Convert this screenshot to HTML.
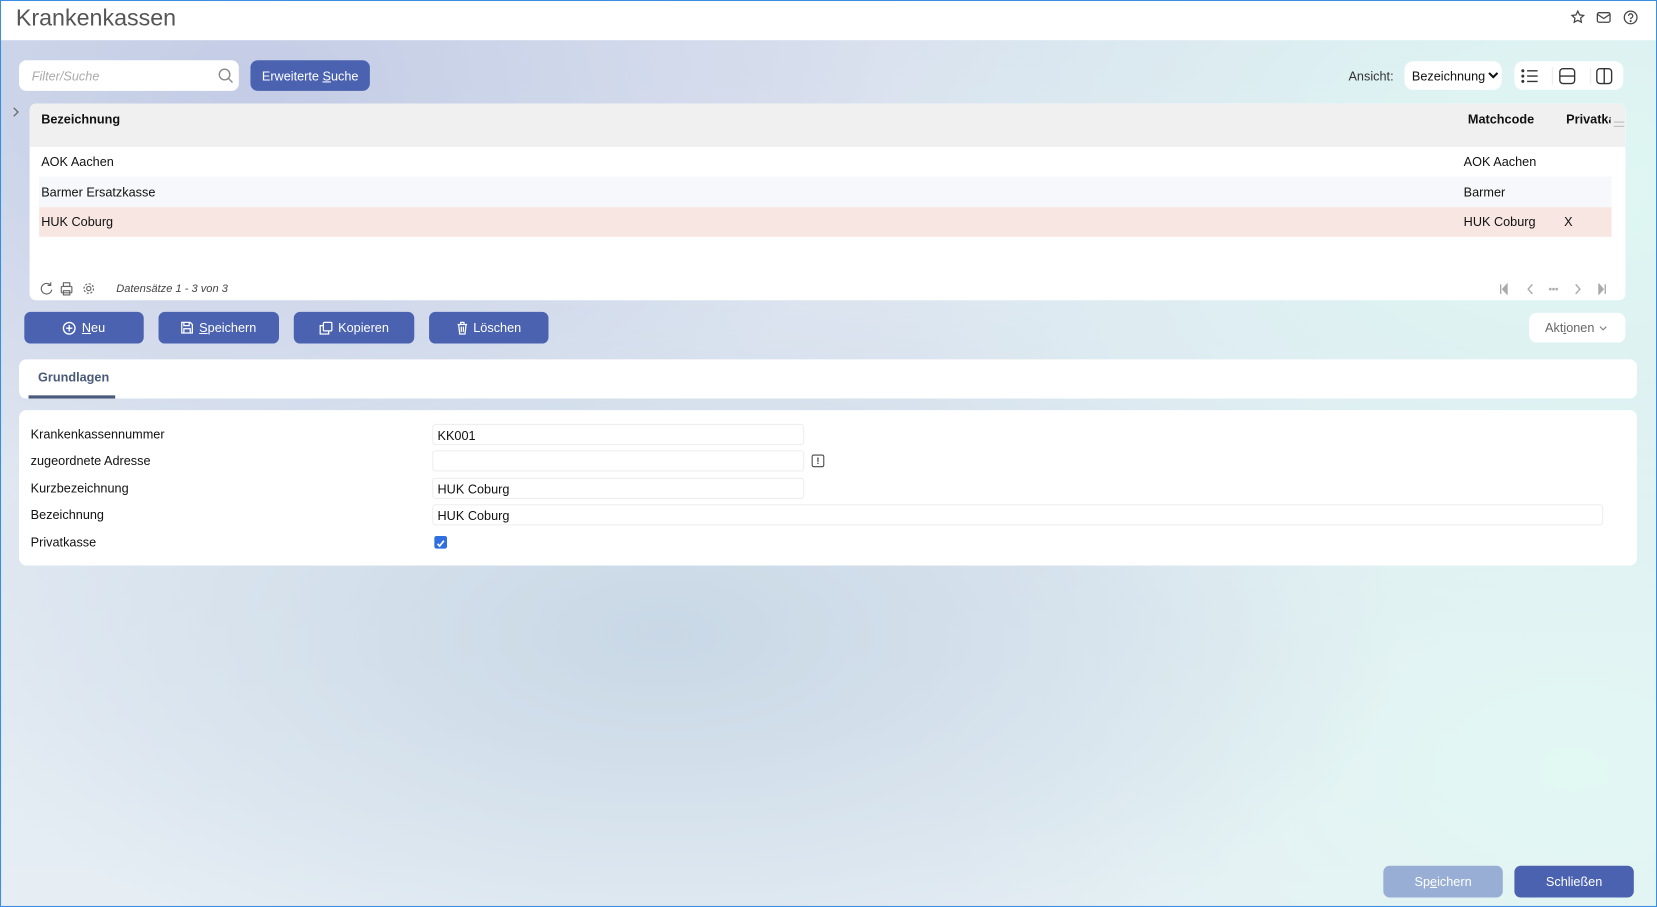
<!DOCTYPE html>
<html><head><meta charset="utf-8"><style>
*{box-sizing:border-box;margin:0;padding:0}
html,body{width:1657px;height:907px;overflow:hidden;font-family:"Liberation Sans",Arial,sans-serif;}
#w{width:1568px;height:858px;transform:scale(1.0568,1.0571);transform-origin:0 0;position:relative;border:1px solid #3a8ee0;
background:
radial-gradient(ellipse 600px 400px at 15% 10%, #c4cce6 0%, rgba(196,204,230,0) 100%),
radial-gradient(ellipse 700px 500px at 95% 20%, #dff8f3 0%, rgba(223,248,243,0) 100%),
radial-gradient(ellipse 700px 350px at 40% 70%, #c9d8e6 0%, rgba(201,216,230,0) 100%),
radial-gradient(ellipse 600px 400px at 95% 85%, #e2f8f3 0%, rgba(226,248,243,0) 100%),
linear-gradient(180deg,#d8e0ee,#e6eef4);}
.a{position:absolute}
.hdr{left:0;top:0;width:1566px;height:37px;background:#fff}
.t{font-size:12px;color:#111}
.btn{position:absolute;background:#4a62b0;color:#fff;border-radius:6px;font-size:12px;display:flex;align-items:center;justify-content:center}
.btn svg{margin-right:5px}
.card{position:absolute;background:#fff;border-radius:6px}
.inp{position:absolute;border:1px solid #eee;border-radius:3px;background:#fff;font-size:12px;padding:3px 4px;color:#111;height:20px}
.lbl{position:absolute;left:11px;font-size:12px;color:#111}
</style></head><body><div id="w">
<div class="a hdr"></div>
<div class="a" style="left:14px;top:3px;font-size:22px;color:#555">Krankenkassen</div>
<svg class="a" style="left:1485px;top:8px" width="64" height="16" viewBox="0 0 64 16" fill="none" stroke="#444" stroke-width="1.2">
<path d="M7 1.5l1.7 3.6 3.8.5-2.8 2.6.7 3.8L7 10.2 3.6 12l.7-3.8L1.5 5.6l3.8-.5z"/>
<rect x="25.5" y="3" width="12" height="9" rx="1.5"/><path d="M25.5 4.5l6 4 6-4"/>
<circle cx="57" cy="7.5" r="6"/><path d="M55 6a2 2 0 1 1 2.5 2c-.5.2-.5.8-.5 1.2"/><circle cx="57" cy="11" r=".4" fill="#444"/>
</svg>
<div class="card" style="left:17px;top:56px;width:208px;height:29px;border-radius:7px"></div>
<div class="a" style="left:29px;top:64px;font-size:12px;color:#aaa;font-style:italic">Filter/Suche</div>
<svg class="a" style="left:205px;top:63px" width="15" height="15" fill="none" stroke="#888" stroke-width="1.3"><circle cx="6.5" cy="6.5" r="5"/><path d="M10 10l4 4"/></svg>
<div class="btn" style="left:236px;top:56px;width:113px;height:29px;border-radius:7px"><span>Erweiterte <u>S</u>uche</span></div>
<div class="a t" style="left:1275px;top:64px;color:#333">Ansicht:</div>
<div class="card" style="left:1328px;top:57px;width:92px;height:27px;border-radius:8px"></div>
<div class="a t" style="left:1335px;top:64px">Bezeichnung</div>
<svg class="a" style="left:1407px;top:67px" width="10" height="7" fill="none" stroke="#111" stroke-width="2"><path d="M1 1l4 4 4-4"/></svg>
<div class="card" style="left:1432px;top:57px;width:103px;height:27px;border-radius:8px"></div>
<svg class="a" style="left:1438px;top:62px" width="95" height="18" fill="none" stroke="#333" stroke-width="1.3">
<path d="M6 4h10M6 9h10M6 14h10"/><circle cx="2" cy="4" r=".8" fill="#333"/><circle cx="2" cy="9" r=".8" fill="#333"/><circle cx="2" cy="14" r=".8" fill="#333"/>
<path d="M30 1v16M66 1v16" stroke="#eee"/>
<rect x="37" y="2" width="14" height="14" rx="3"/><path d="M37 9h14"/>
<rect x="72" y="2" width="14" height="14" rx="3"/><path d="M79 2v14"/>
</svg>
<svg class="a" style="left:10px;top:100px" width="8" height="10" fill="none" stroke="#666" stroke-width="1.2"><path d="M2 1l4 4-4 4"/></svg>
<div class="card" style="left:27px;top:97px;width:1510px;height:186px;overflow:hidden">
<div class="a" style="left:0;top:0;width:1510px;height:41px;background:#f0f0f0"></div>
<div class="a t" style="left:11px;top:8px;font-weight:bold">Bezeichnung</div>
<div class="a t" style="left:1361px;top:8px;font-weight:bold">Matchcode</div>
<div class="a t" style="left:1454px;top:8px;font-weight:bold;width:42px;overflow:hidden;white-space:nowrap">Privatkasse</div>
<div class="a" style="left:1499px;top:17px;width:10px;height:5px;border-top:1px solid #bbb;border-bottom:1px solid #bbb"></div>
<div class="a" style="left:9px;top:69px;width:1488px;height:29px;background:#f6f8fc"></div>
<div class="a" style="left:9px;top:98px;width:1488px;height:28px;background:#f8e6e3"></div>
<div class="a t" style="left:11px;top:48px">AOK Aachen</div><div class="a t" style="left:1357px;top:48px">AOK Aachen</div>
<div class="a t" style="left:11px;top:77px">Barmer Ersatzkasse</div><div class="a t" style="left:1357px;top:77px">Barmer</div>
<div class="a t" style="left:11px;top:105px">HUK Coburg</div><div class="a t" style="left:1357px;top:105px">HUK Coburg</div><div class="a t" style="left:1452px;top:105px">X</div>
<svg class="a" style="left:10px;top:168px" width="55" height="14" fill="none" stroke="#666" stroke-width="1.1"><path d="M10 4A5 5 0 1 0 11 8M10 1v3H7"/><rect x="20" y="5" width="10" height="6" rx="1"/><rect x="22" y="1.5" width="6" height="3.5"/><rect x="22" y="9" width="6" height="4"/><circle cx="46" cy="7" r="2"/><circle cx="46" cy="7" r="4.5" stroke-dasharray="2 1.5"/></svg>
<div class="a" style="left:82px;top:169px;font-size:10.5px;font-style:italic;color:#444">Datensätze 1 - 3 von 3</div>
<svg class="a" style="left:1390px;top:170px" width="105" height="11" fill="none" stroke="#aaa" stroke-width="1.3"><path d="M2 1v9M8 1l-4 4.5 4 4.5z" fill="#aaa"/><path d="M32 1l-4 4.5 4 4.5"/><circle cx="49" cy="5.5" r=".6" fill="#aaa"/><circle cx="52" cy="5.5" r=".6" fill="#aaa"/><circle cx="55" cy="5.5" r=".6" fill="#aaa"/><path d="M73 1l4 4.5-4 4.5"/><path d="M95 1l4 4.5-4 4.5zM101 1v9" fill="#aaa"/></svg>
</div>
<div class="btn" style="left:22px;top:294px;width:113px;height:30px"><svg width="13" height="13" fill="none" stroke="#fff" stroke-width="1.3"><circle cx="6.5" cy="6.5" r="5.5"/><path d="M6.5 3.5v6M3.5 6.5h6"/></svg><span><u>N</u>eu</span></div>
<div class="btn" style="left:149px;top:294px;width:114px;height:30px"><svg width="12" height="12" fill="none" stroke="#fff" stroke-width="1.2"><path d="M1 1h8l2 2v8H1z"/><path d="M3 1v3h5V1M3 11V7h6v4"/></svg><span><u>S</u>peichern</span></div>
<div class="btn" style="left:277px;top:294px;width:114px;height:30px"><svg width="13" height="13" fill="none" stroke="#fff" stroke-width="1.2"><rect x="4" y="1" width="8" height="8" rx="1"/><path d="M4 4H1v8h8V9"/></svg><span>Kopieren</span></div>
<div class="btn" style="left:405px;top:294px;width:113px;height:30px"><svg width="11" height="13" fill="none" stroke="#fff" stroke-width="1.2"><path d="M1 3h9M4 3V1h3v2M2 3l1 9h5l1-9M4.5 5v5M6.5 5v5"/></svg><span>Löschen</span></div>
<div class="card" style="left:1446px;top:295px;width:91px;height:28px;border-radius:7px"></div>
<div class="a" style="left:1461px;top:302px;font-size:12px;color:#666">Akt<u>i</u>onen</div>
<svg class="a" style="left:1512px;top:307px" width="8" height="5" fill="none" stroke="#777" stroke-width="1"><path d="M1 1l3 3 3-3"/></svg>
<div class="card" style="left:17px;top:339px;width:1531px;height:37px;border-radius:7px"></div>
<div class="a" style="left:35px;top:349px;font-size:12px;font-weight:bold;color:#4a5a7a">Grundlagen</div>
<div class="a" style="left:26px;top:373px;width:82px;height:3px;background:#4a5a7a"></div>
<div class="card" style="left:17px;top:387px;width:1531px;height:147px;border-radius:7px">
<div class="lbl" style="top:16px">Krankenkassennummer</div>
<div class="lbl" style="top:41px">zugeordnete Adresse</div>
<div class="lbl" style="top:67px">Kurzbezeichnung</div>
<div class="lbl" style="top:92px">Bezeichnung</div>
<div class="lbl" style="top:118px">Privatkasse</div>
<div class="inp" style="left:391px;top:13px;width:352px">KK001</div>
<div class="inp" style="left:391px;top:38px;width:352px"></div>
<div class="a" style="left:750px;top:42px;width:12px;height:12px;border:1.3px solid #444;border-radius:2px;font-size:9px;text-align:center;line-height:10px;font-weight:bold;color:#444">!</div>
<div class="inp" style="left:391px;top:64px;width:352px">HUK Coburg</div>
<div class="inp" style="left:391px;top:89px;width:1108px">HUK Coburg</div>
<div class="a" style="left:393px;top:119px;width:12px;height:12px;background:#2f6fe0;border-radius:2px"><svg width="12" height="12" fill="none" stroke="#fff" stroke-width="1.6"><path d="M3 6.5l2 2 4-5"/></svg></div>
</div>
<div class="btn" style="left:1308px;top:818px;width:113px;height:30px;background:#98aed4"><span>Sp<u>e</u>ichern</span></div>
<div class="btn" style="left:1432px;top:818px;width:113px;height:30px"><span>Schließen</span></div>
</div></body></html>
